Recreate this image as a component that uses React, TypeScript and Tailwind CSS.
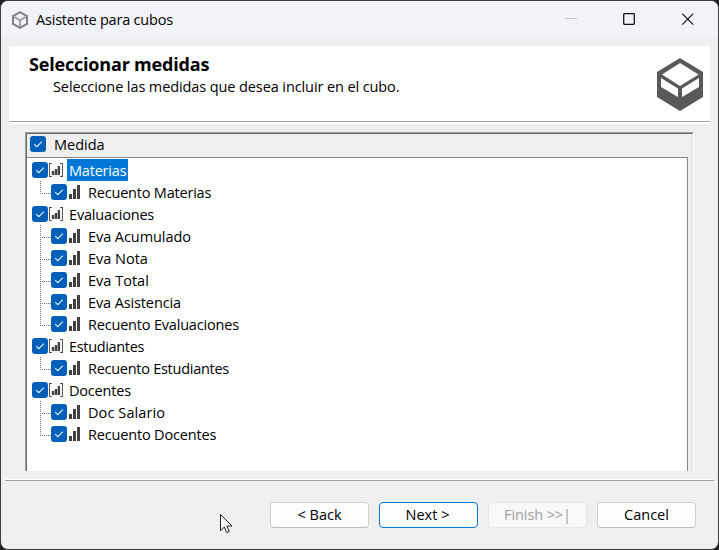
import React from "react";

type Measure = { label: string; tracking: string; group?: boolean; selected?: boolean; last?: boolean };

const measures: Measure[] = [
  { label: "Materias", tracking: "tracking-[-0.2px]", group: true, selected: true },
  { label: "Recuento Materias", tracking: "tracking-[-0.2px]", last: true },
  { label: "Evaluaciones", tracking: "tracking-[-0.18px]", group: true },
  { label: "Eva Acumulado", tracking: "tracking-[-0.07px]" },
  { label: "Eva Nota", tracking: "tracking-[-0.02px]" },
  { label: "Eva Total", tracking: "tracking-[0.01px]" },
  { label: "Eva Asistencia", tracking: "tracking-[-0.12px]" },
  { label: "Recuento Evaluaciones", tracking: "tracking-[-0.19px]", last: true },
  { label: "Estudiantes", tracking: "tracking-[-0.33px]", group: true },
  { label: "Recuento Estudiantes", tracking: "tracking-[-0.27px]", last: true },
  { label: "Docentes", tracking: "tracking-[-0.19px]", group: true },
  { label: "Doc Salario", tracking: "tracking-[0.1px]" },
  { label: "Recuento Docentes", tracking: "tracking-[-0.17px]", last: true },
];

function Check() {
  return (
    <span className="flex h-4 w-4 shrink-0 items-center justify-center rounded-[3px] bg-[#005fb8]">
      <svg width="16" height="16" viewBox="0 0 16 16" fill="none">
        <path d="M4.2 8.2 6.8 10.7 11.9 5.7" stroke="#e8f1fa" strokeWidth="1.1" />
      </svg>
    </span>
  );
}

function GroupIcon() {
  return (
    <svg className="shrink-0" width="14" height="14" viewBox="0 0 14 14">
      <path d="M0 0h3v1H1v12h2v1H0zM14 0h-3v1h2v12h-2v1h3z" fill="#555" />
      <path d="M2.800 8h2.400v4H2.800zM5.800 6h2.400v6H5.800zM8.700 3h2.400v9H8.700z" fill="#404040" />
    </svg>
  );
}

function BarsIcon() {
  return (
    <svg className="shrink-0" width="11" height="14" viewBox="0 0 11 14" shapeRendering="crispEdges">
      <path d="M0 9h3v5H0zM4 4h3v10H4zM8 0h3v14H8z" fill="#404040" />
    </svg>
  );
}

function Row({ m }: { m: Measure }) {
  if (m.group) {
    return (
      <div className="flex h-[22px] items-center pl-[5px]">
        <Check />
        <span className="ml-px flex"><GroupIcon /></span>
        <span className={`ml-1 flex h-[22px] items-center pt-px pr-0.5 pl-0.5 ${m.selected ? "bg-[#0078d7] text-white" : ""} ${m.tracking}`}>
          {m.label}
        </span>
      </div>
    );
  }
  return (
    <div className="flex h-[22px] items-center pl-[13px]">
      <svg className="shrink-0" width="11" height="22" shapeRendering="crispEdges">
        <path d={m.last ? "M.5 0V13" : "M.5 0V22"} stroke="#707070" strokeDasharray="1 1" />
        <path d="M2 12.5H11" stroke="#707070" strokeDasharray="1 1" />
      </svg>
      <Check />
      <span className="ml-0.5 flex"><BarsIcon /></span>
      <span className={`ml-2 pt-px ${m.tracking}`}>{m.label}</span>
    </div>
  );
}

function Button({ children, className }: { children: React.ReactNode; className: string }) {
  return (
    <button className={`flex h-[26px] w-[99px] items-center justify-center rounded-[4px] border ${className}`}>
      {children}
    </button>
  );
}

export default function App() {
  return (
    <div className="h-[550px] w-[719px] overflow-hidden bg-[#202020] font-['Open_Sans','Noto_Sans',sans-serif] text-[14.5px] leading-[20px] text-black">
      <div className="relative flex h-full w-full flex-col overflow-hidden rounded-[8px] border border-[#3c3c3e] bg-[#efefef]">
        <header className="flex h-[37px] shrink-0 items-center bg-[#f2f2f9] pl-[11px]">
          <svg width="16" height="18" viewBox="0 0 16 18" fill="none" stroke="#828282" strokeWidth="2">
            <path d="M8 1.200 15 5v8l-7 3.800L1 13V5z" />
            <path d="m2.500 6 5.500 3.500L13.500 6M8 9.500V16" stroke="#999" strokeWidth="1.8" />
          </svg>
          <span className="ml-2 tracking-[-0.2px]">Asistente para cubos</span>
          <svg className="ml-auto mr-6" width="129" height="13" viewBox="0 0 129 13" fill="none">
            <path d="M0 5.500h12" stroke="#c4c4c8" />
            <rect x="58.700" y="0.700" width="10.600" height="10.600" rx="0.7" stroke="#111" strokeWidth="1.3" />
            <path d="m117.200 0.600 11 11M128.200 0.600l-11 11" stroke="#111" strokeWidth="1.2" />
          </svg>
        </header>
        <section className="mx-2 mt-2 flex h-[78px] shrink-0 flex-col bg-white">
          <div className="flex h-[75px] justify-between">
            <div className="pl-5 pt-[7px]">
              <h1 className="text-[18px] leading-[22px] font-bold tracking-[-0.19px]">Seleccionar medidas</h1>
              <p className="ml-6 pt-0.5 tracking-[-0.1px]">Seleccione las medidas que desea incluir en el cubo.</p>
            </div>
            <svg className="mt-3 mr-[7px]" width="46" height="54" viewBox="0 0 46 54">
              <path d="M23 0 46 14v25L23 53 0 39V14z" fill="#58595b" />
              <path d="M23 5 41.500 16.500 23 28 5 16.500zM4 20l17 10.500V39L4 29zM42 20 25 30.500V39l17-10z" fill="#fff" />
            </svg>
          </div>
          <div className="h-px bg-[#a0a0a0]" />
        </section>
        <main className="mt-2 ml-6 h-[339px] w-[669px] shrink-0 border-t border-l border-[#a0a0a0] border-r border-r-white">
          <div className="h-full border-t border-l border-[#696969] border-r border-r-[#e3e3e3]">
            <div className="flex h-[23px] items-start pt-0.5 pl-[3px]">
              <Check />
              <span className="ml-2 -mt-px">Medida</span>
            </div>
            <div className="h-[314px] w-[661px] border-t border-r border-[#828790] bg-white pt-px">
              {measures.map((m) => <Row key={m.label} m={m} />)}
            </div>
          </div>
        </main>
        <footer className="mx-1 mt-2 border-t border-white">
          <div className="flex gap-2.5 border-t border-[#a0a0a0] pt-[21px] pl-[265px]">
            <Button className="border-[#d0d0d0] border-b-[#bcbcbc] bg-[#fdfdfd]">&lt; Back</Button>
            <Button className="border-[#0078d4] bg-[#fdfdfd] pr-0.5">Next &gt;</Button>
            <Button className="border-[#e6e6e6] bg-[#f8f8f8] tracking-[-0.1px] text-[#a0a0a0]">Finish &gt;&gt;|</Button>
            <Button className="border-[#d0d0d0] border-b-[#bcbcbc] bg-[#fdfdfd]">Cancel</Button>
          </div>
        </footer>
        <svg className="absolute top-[513px] left-[219px]" width="13" height="20" viewBox="0 0 13 20">
          <path d="M.5.5v16.200l3.800-3.700 2.500 5.600 2.500-1.100-2.400-5.500h5.100z" fill="#fff" stroke="#222" />
        </svg>
      </div>
    </div>
  );
}
